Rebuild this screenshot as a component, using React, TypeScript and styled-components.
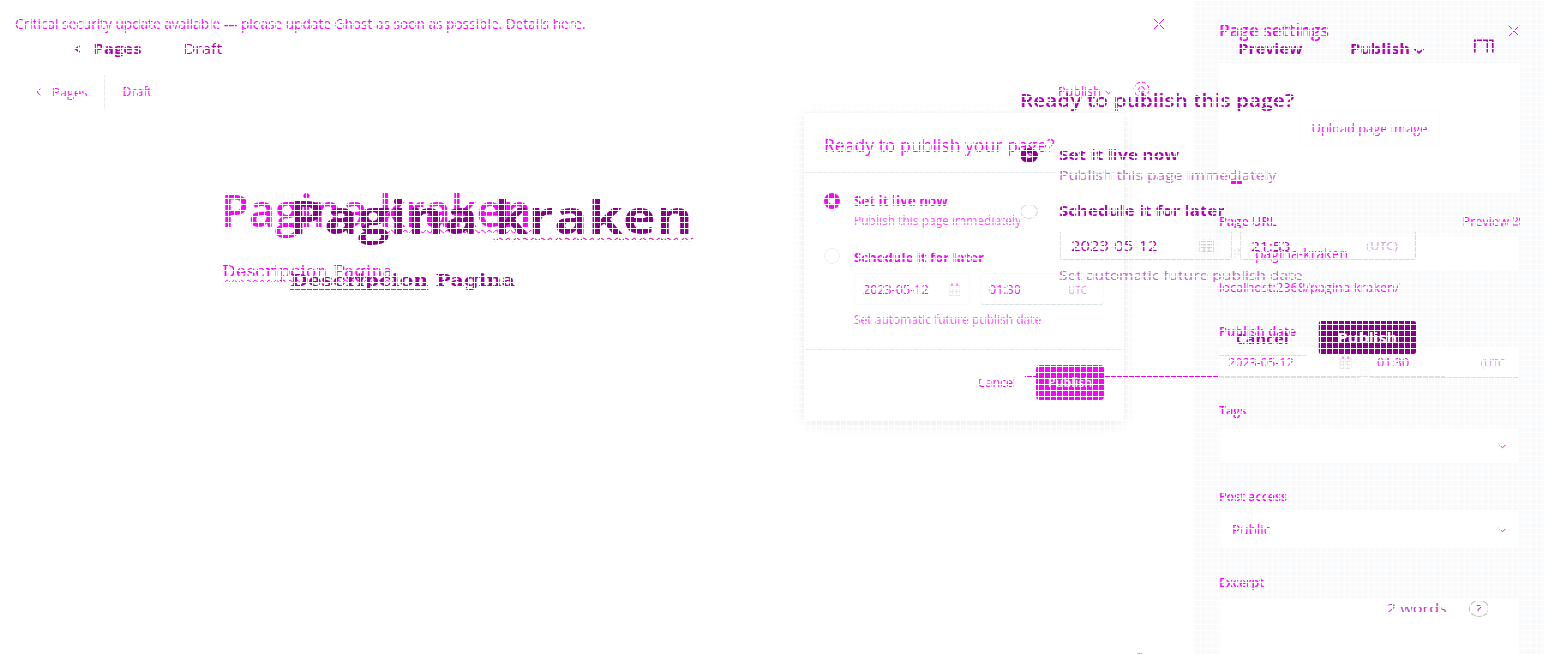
import React from 'react';
import styled, { createGlobalStyle } from 'styled-components';

const Global = createGlobalStyle`
  html, body { margin: 0; padding: 0; background: #fff; overflow: hidden; }
  * { box-sizing: border-box; }
`;

const PINK = '#ff00ff';
const PLUM = '#8b008b';
const ORCHID = '#b000b4';

const Stage = styled.div`
  position: relative;
  width: 1544px;
  height: 655px;
  overflow: hidden;
  font-family: 'Open Sans', 'Noto Sans', sans-serif;
`;

const Grid = styled.div`
  position: absolute;
  inset: 0;
  pointer-events: none;
  background-image: linear-gradient(to right, #fff 1px, transparent 1px),
    linear-gradient(to bottom, #fff 1px, transparent 1px);
  background-size: 6px 6px;
`;

const BaseLayer = styled.div`
  display: flex;
  height: 655px;
  color: ${PINK};
`;

const WideLayer = styled.div`
  position: absolute;
  top: 0;
  left: 0;
  width: 1286.67px;
  height: 655px;
  display: flex;
  flex-direction: column;
  transform: scaleX(1.2);
  transform-origin: 0 0;
  color: ${ORCHID};
`;

const Text = styled.span<{ $size?: number; $weight?: number; $color?: string; $line?: number; $ml?: number; $ls?: number }>`
  display: block;
  white-space: nowrap;
  font-size: ${p => p.$size ?? 13}px;
  font-weight: ${p => p.$weight ?? 400};
  line-height: ${p => p.$line ?? 20}px;
  margin-left: ${p => p.$ml ?? 0}px;
  letter-spacing: ${p => p.$ls ?? 0}px;
  ${p => p.$color && `color: ${p.$color};`}
`;

const Serif = styled(Text)`
  font-family: 'DejaVu Serif', serif;
`;

const Dash = styled.span`
  position: relative;
  top: 1px;
`;

const Misspelt = styled.span<{ $color: string; $offset: number; $kind?: string }>`
  text-decoration: underline ${p => p.$kind ?? 'wavy'} ${p => p.$color} 1px;
  text-underline-offset: ${p => p.$offset}px;
  text-decoration-skip-ink: none;
`;

const Main = styled.main`
  width: 1195px;
  display: flex;
  flex-direction: column;
`;

const Banner = styled.div`
  display: flex;
  align-items: center;
  justify-content: space-between;
  height: 48px;
  padding: 0 30px 0 15px;
`;

const Bar = styled.header<{ $height: number; $left: number; $right: number }>`
  display: flex;
  align-items: center;
  height: ${p => p.$height}px;
  padding: 0 ${p => p.$right}px 0 ${p => p.$left}px;
`;

const Push = styled.div`
  display: flex;
  align-items: center;
  margin-left: auto;
`;

const Divider = styled.i`
  width: 1px;
  height: 35px;
  margin: 0 18px 0 16px;
  background: #e9ebed;
`;

const Writing = styled.section<{ $top: number; $left: number; $gap: number }>`
  display: flex;
  flex-direction: column;
  align-items: flex-start;
  gap: ${p => p.$gap}px;
  padding: ${p => p.$top}px 0 0 ${p => p.$left}px;
`;

const Popup = styled.section`
  position: absolute;
  left: 804px;
  top: 113px;
  width: 320px;
  height: 307px;
  display: flex;
  flex-direction: column;
  background: #fff;
  border-radius: 3px;
  box-shadow: 0 0 1px rgba(0, 0, 0, 0.16), 0 4px 16px rgba(0, 0, 0, 0.09);
`;

const PopupHead = styled.div`
  display: flex;
  align-items: center;
  height: 60px;
  padding: 5px 20px 0;
  border-bottom: 1px solid #e6edf2;
`;

const PopupBody = styled.div`
  display: flex;
  flex-direction: column;
  gap: 18px;
  flex: 1;
  padding: 19px 20px 0;
`;

const PopupFoot = styled.div`
  display: flex;
  align-items: center;
  justify-content: flex-end;
  gap: 20px;
  height: 71px;
  padding: 0 20px 5px;
  border-top: 1px solid #e8ebee;
`;

const Option = styled.div<{ $gap: number }>`
  display: flex;
  gap: ${p => p.$gap}px;
`;

const OptionText = styled.div`
  flex: 1;
`;

const Radio = styled.i<{ $size: number; $ring: string; $width: number; $top: number }>`
  flex: none;
  width: ${p => p.$size}px;
  height: ${p => p.$size}px;
  margin-top: ${p => p.$top}px;
  border: ${p => p.$width}px solid ${p => p.$ring};
  border-radius: 50%;
`;

const Fields = styled.div<{ $top: number; $bottom: number; $gap: number }>`
  display: flex;
  gap: ${p => p.$gap}px;
  margin: ${p => p.$top}px 0 ${p => p.$bottom}px;
`;

const Field = styled.div<{ $w?: number; $h: number; $line?: string; $base?: string; $top?: number; $px?: number; $end?: number; $align?: string }>`
  display: flex;
  align-items: center;
  justify-content: ${p => p.$align ?? 'space-between'};
  ${p => (p.$w ? `width: ${p.$w}px;` : 'flex: 1;')}
  height: ${p => p.$h}px;
  margin-top: ${p => p.$top ?? 0}px;
  padding: 1px ${p => p.$end ?? p.$px ?? 9}px 0 ${p => p.$px ?? 9}px;
  border: 1px solid ${p => p.$line ?? '#f8f9fa'};
  border-bottom-color: ${p => p.$base ?? p.$line ?? '#f8f9fa'};
  border-radius: 4px;
`;

const OpenField = styled(Field)`
  border-top-color: transparent;
  border-radius: 2px;
  padding-top: 0;
`;

const Button = styled.button<{ $w: number; $h: number; $bg: string; $radius: number }>`
  display: flex;
  align-items: center;
  justify-content: center;
  width: ${p => p.$w}px;
  height: ${p => p.$h}px;
  padding: 1px 0 0;
  border: 0;
  border-radius: ${p => p.$radius}px;
  background: ${p => p.$bg};
  color: #f5f5f5;
  font-family: inherit;
`;

const UploadButton = styled(Button)`
  border: 1px solid #fafbfc;
`;

const Sidebar = styled.aside`
  width: 349px;
  padding: 19px 24px 0;
  background: #f9fafc;
`;

const Line = styled.div<{ $top?: number }>`
  display: flex;
  align-items: center;
  justify-content: space-between;
  margin-top: ${p => p.$top ?? 0}px;
`;

const SideField = styled(Field)`
  flex: none;
  background: #fff;
`;

const Pair = styled.div`
  display: grid;
  grid-template-columns: 142px 1fr;
  gap: 8px;
  margin-top: 5px;
`;

const ImageBox = styled.div`
  position: relative;
  display: flex;
  align-items: center;
  justify-content: center;
  height: 129px;
  margin-top: 20px;
  border-radius: 4px;
  background: #fff;
`;

const TrashMark = styled.i`
  position: absolute;
  left: 12px;
  bottom: 8px;
  width: 12px;
  height: 3px;
  background: ${PINK};
`;

const Dialog = styled.section`
  position: absolute;
  left: 850px;
  top: 88px;
  width: 330px;
`;

const DialogOption = styled(Option)<{ $top: number }>`
  margin-top: ${p => p.$top}px;
`;

const DialogFoot = styled.div`
  display: flex;
  align-items: flex-start;
  justify-content: flex-end;
  margin-top: 36px;
`;

const CancelBox = styled.div`
  display: flex;
  align-items: flex-end;
  width: 73px;
  height: 35px;
  margin: 0 10.4px 0 0;
  padding: 0 0 6px 14px;
  border-bottom: 1px solid #dcdfe2;
`;

const Rule = styled.i<{ $left: number; $width: number; $color: string }>`
  position: absolute;
  top: 288px;
  left: ${p => p.$left}px;
  width: ${p => p.$width}px;
  height: 1px;
  background: ${p => p.$color};
`;

const WordCount = styled.footer`
  display: flex;
  align-items: center;
  justify-content: flex-end;
  gap: 18px;
  margin-top: auto;
  padding: 0 46px 37px 0;
`;

const Help = styled.span`
  display: flex;
  align-items: center;
  justify-content: center;
  width: 17px;
  height: 17px;
  border: 1px solid #bdbdbd;
  border-radius: 50%;
  font-size: 11px;
`;

const HelpEdge = styled.i`
  width: 12px;
  height: 12px;
  margin: auto 49px -10px auto;
  border: 1px solid #999;
  border-radius: 50%;
`;

const Labelled = styled.div`
  display: flex;
  align-items: center;
  gap: 3px;
`;

const Cross = () => (
  <svg width="12" height="12" viewBox="0 0 12 12" fill="none" stroke={PINK}>
    <path d="M.7.7l10.6 10.6M11.3.7L.7 11.3" />
  </svg>
);

const Back = ({ w = 1 }: { w?: number }) => (
  <svg width="5" height="8" viewBox="0 0 5 8" fill="none" stroke="currentColor" strokeWidth={w}>
    <path d="M4.4.8L1 4l3.4 3.2" />
  </svg>
);

const Down = ({ w = 1 }: { w?: number }) => (
  <svg width="9" height="6" viewBox="0 0 9 6" fill="none" stroke="currentColor" strokeWidth={w}>
    <path d="M.7 1l3.8 3.8L8.3 1" />
  </svg>
);

const Cog = () => (
  <svg width="17" height="17" viewBox="0 0 17 17" fill="none" stroke={PINK}>
    <circle cx="8.5" cy="8.5" r="7.4" strokeDasharray="4.2 1.6" />
    <circle cx="8.5" cy="8.5" r="2.8" />
  </svg>
);

const Calendar = ({ color, dark }: { color: string; dark?: string }) => (
  <svg width="13" height="13" viewBox="0 0 13 13" fill="none" stroke={color}>
    <path d="M1 2.5h11v10H1zM1 5.5h11M1 8.5h11M4.5 5v8M8.5 5v8" />
    <path d="M4 .5v2M9 .5v2" stroke={dark ?? color} />
  </svg>
);

const Panel = () => (
  <svg width="17" height="16" viewBox="0 0 17 16" fill="none" stroke={ORCHID} strokeWidth="1.4">
    <path d="M1 14.500V2.200h15v12.300M11.5 2v12.500" />
  </svg>
);

const Link = () => (
  <svg width="12" height="12" viewBox="0 0 12 12" fill="none" stroke="#dedede">
    <path d="M5 7l5-5M3.5 5L1.8 6.7a2.4 2.4 0 003.5 3.5L7 8.5M5 3.5l1.7-1.7a2.4 2.4 0 013.5 3.5L8.5 7" />
  </svg>
);

const Outbound = () => (
  <svg width="8" height="9" viewBox="0 0 8 9" fill="none" stroke={PINK}>
    <path d="M2 1H.7v7H7V5M2.5 6L7 1M4 1h3.3v3" />
  </svg>
);

export default function App() {
  return (
    <Stage>
      <Global />
      <BaseLayer>
        <Main>
          <Banner>
            <Text $size={13.66}>
              Critical security update available <Dash>—</Dash> please update Ghost as soon as possible. Details here.
            </Text>
            <Cross />
          </Banner>
          <Bar $height={88} $left={36} $right={45}>
            <Back />
            <Text $size={13} $ml={11}>Pages</Text>
            <Divider />
            <Text $size={12.2}>Draft</Text>
            <Push>
              <Labelled>
                <Text $size={12.6}>Publish</Text>
                <Down />
              </Labelled>
              <Text $ml={20}><Cog /></Text>
            </Push>
          </Bar>
          <Writing $top={46} $left={221} $gap={21}>
            <Text $size={45.8} $weight={600} $line={54} $ls={-0.35}>
              Pagina <Misspelt $color={PINK} $offset={2}>kraken</Misspelt>
            </Text>
            <Serif $size={17.5} $line={28} $ml={1}>
              <Misspelt $color={PINK} $offset={2}>Descripcion</Misspelt>{' '}
              <Misspelt $color={PINK} $offset={2}>Pagina</Misspelt>
            </Serif>
          </Writing>
          <HelpEdge />
        </Main>

        <Sidebar>
          <Line>
            <Text $size={17.2} $weight={600} $line={24}>Page settings</Text>
            <Cross />
          </Line>
          <ImageBox>
            <UploadButton $w={141} $h={36} $bg="#fff" $radius={4}>
              <Text $size={12.9} $weight={500} $color={PINK}>Upload page image</Text>
            </UploadButton>
            <TrashMark />
          </ImageBox>
          <Line $top={19}>
            <Text $size={12.8} $weight={600}>Page URL</Text>
            <Labelled>
              <Text $size={12.7}>Preview</Text>
              <Outbound />
            </Labelled>
          </Line>
          <SideField $h={36} $top={4} $px={9} $align="flex-start">
            <Link />
            <Text $size={14} $ml={14}>pagina-kraken</Text>
          </SideField>
          <Line $top={6}>
            <Text $size={12.8} $weight={500}>localhost:2368/pagina-kraken/</Text>
          </Line>
          <Line $top={24}>
            <Text $size={12.9} $weight={600}>Publish date</Text>
          </Line>
          <Pair>
            <SideField $h={32} $base="#d9dee2" $px={8}>
              <Text $size={12.6}>2023-05-12</Text>
              <Calendar color="#e2e4e6" dark={PINK} />
            </SideField>
            <SideField $h={32} $base="#d9dee2" $px={7} $end={14}>
              <Text $size={12.6}>01:30</Text>
              <Text $size={11} $color="#f080f2">(UTC</Text>
            </SideField>
          </Pair>
          <Line $top={23}>
            <Text $size={12.5} $weight={600}>Tags</Text>
          </Line>
          <SideField $h={37} $top={6} $px={12} $align="flex-end">
            <Down />
          </SideField>
          <Line $top={23}>
            <Text $size={12.4} $weight={600}>Post access</Text>
          </Line>
          <SideField $h={39} $top={3} $px={12}>
            <Text $size={13.6}>Public</Text>
            <Down />
          </SideField>
          <Line $top={24}>
            <Text $size={12.4} $weight={600}>Excerpt</Text>
          </Line>
          <SideField $h={90} $top={4} />
        </Sidebar>

        <Popup>
          <PopupHead>
            <Text $size={17.6} $line={24}>Ready to publish your page?</Text>
          </PopupHead>
          <PopupBody>
            <Option $gap={14}>
              <Radio $size={16} $ring={PINK} $width={5} $top={1} />
              <OptionText>
                <Text $size={13.4} $weight={700} $line={19}>Set it live now</Text>
                <Text $size={12} $line={19} $color="#fb4cfc">Publish this page immediately</Text>
              </OptionText>
            </Option>
            <Option $gap={14}>
              <Radio $size={16} $ring="#e8eef2" $width={1} $top={0} />
              <OptionText>
                <Text $size={13.2} $weight={700} $line={19}>Schedule it for later</Text>
                <Fields $top={6} $bottom={5} $gap={10}>
                  <Field $w={116} $h={32} $px={8}>
                    <Text $size={12.6}>2023-05-12</Text>
                    <Calendar color="#e6e6e6" dark={PINK} />
                  </Field>
                  <Field $h={32} $base="#d8e3e8" $px={8} $end={16}>
                    <Text $size={12.5} $weight={500}>01:30</Text>
                    <Text $size={10} $color="#f08af2">UTC</Text>
                  </Field>
                </Fields>
                <Text $size={12} $line={19} $color="#fb4cfc">Set automatic future publish date</Text>
              </OptionText>
            </Option>
          </PopupBody>
          <PopupFoot>
            <Text $size={12.4}>Cancel</Text>
            <Button $w={68} $h={35} $bg={PINK} $radius={4}>
              <Text $size={12.5} $weight={600}>Publish</Text>
            </Button>
          </PopupFoot>
        </Popup>
      </BaseLayer>

      <WideLayer>
        <Bar $height={97} $left={62} $right={41.7}>
          <Back w={1.6} />
          <Text $size={13.8} $weight={700} $ml={11}>Pages</Text>
          <Text $size={13.6} $weight={500} $ml={35}>Draft</Text>
          <Push>
            <Text $size={13.4} $weight={700}>Preview</Text>
            <Text $size={13.6} $weight={700} $ml={39.5}>Publish</Text>
            <Text $ml={3}><Down w={1.6} /></Text>
            <Text $ml={41}><Panel /></Text>
          </Push>
        </Bar>
        <Writing $top={92} $left={240.8} $gap={23}>
          <Text $size={46} $weight={700} $line={54} $color={PLUM} $ls={0.55}>
            Pagina <Misspelt $color="#f0109a" $offset={3}>kraken</Misspelt>
          </Text>
          <Serif $size={17.3} $weight={700} $line={28} $ml={1} $color="#a000a8">
            <Misspelt $color="#f0109a" $offset={3} $kind="solid">Descripcion</Misspelt> Pagina
          </Serif>
        </Writing>

        <Dialog>
          <Text $size={17.4} $weight={600} $line={24}>Ready to publish this page?</Text>
          <DialogOption $gap={17.5} $top={32.5}>
            <Radio $size={15} $ring={PLUM} $width={5} $top={3} />
            <OptionText>
              <Text $size={14.3} $weight={700}>Set it live now</Text>
              <Text $size={13} $color="#c264c6">Publish this page immediately</Text>
            </OptionText>
          </DialogOption>
          <DialogOption $gap={17.5} $top={16.5}>
            <Radio $size={15} $ring="#d8d8d8" $width={1} $top={3} />
            <OptionText>
              <Text $size={14} $weight={700}>Schedule it for later</Text>
              <Fields $top={10} $bottom={5} $gap={6}>
                <OpenField $w={144} $h={29} $line="#d9d9d9" $end={14}>
                  <Text $size={13.8}>2023-05-12</Text>
                  <Calendar color="#d0d0d0" />
                </OpenField>
                <OpenField $h={29} $line="#d9d9d9" $end={14}>
                  <Text $size={12.9} $weight={500}>21:53</Text>
                  <Text $size={10.500} $color="#cf9cd2">(UTC)</Text>
                </OpenField>
              </Fields>
              <Text $size={13} $color="#c264c6">Set automatic future publish date</Text>
            </OptionText>
          </DialogOption>
          <DialogFoot>
            <CancelBox>
              <Text $size={13.4} $weight={700}>Cancel</Text>
            </CancelBox>
            <Button $w={81} $h={33} $bg={PLUM} $radius={2}>
              <Text $size={13.5} $weight={700}>Publish</Text>
            </Button>
          </DialogFoot>
          <Rule $left={4} $width={162} $color="#e800e8" />
          <Rule $left={166} $width={188} $color="#dcdfe2" />
        </Dialog>

        <WordCount>
          <Text $size={13.5} $color="#b53cb8">2 words</Text>
          <Help>?</Help>
        </WordCount>
      </WideLayer>
      <Grid />
    </Stage>
  );
}
